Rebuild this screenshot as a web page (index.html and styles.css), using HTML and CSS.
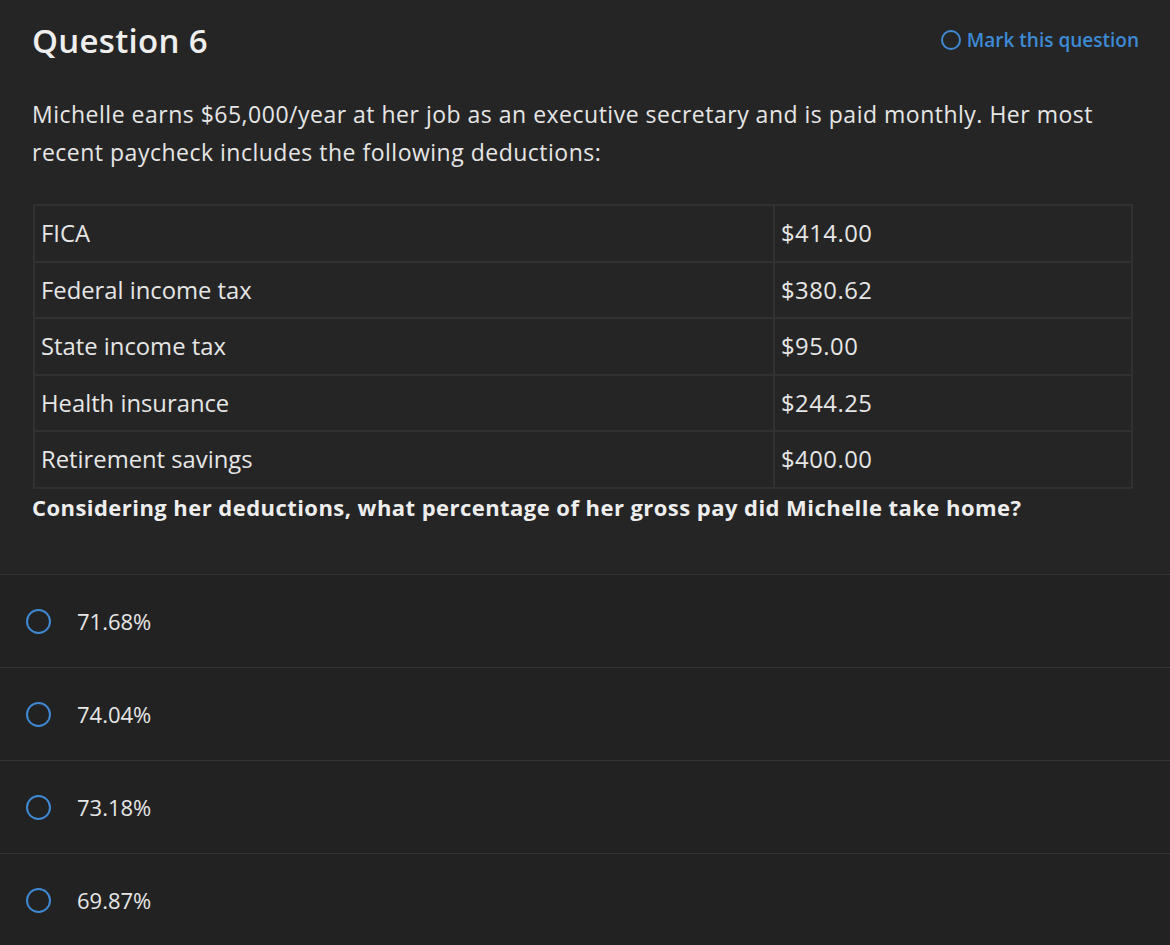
FILE: index.html
```html
<!DOCTYPE html>
<html lang="en">
<head>
<meta charset="utf-8">
<title>Question 6</title>
<link rel="stylesheet" href="styles.css">
</head>
<body>
<div class="question">
  <div class="q-head">
    <h1 class="q-title">Question 6</h1>
    <a class="mark" href="#"><span class="ring small"></span>Mark this question</a>
  </div>
  <div class="q-body">
    <p class="q-text">Michelle earns $65,000/year at her job as an executive secretary and is paid monthly. Her most recent paycheck includes the following deductions:</p>
    <table class="deductions">
      <tr><td class="name">FICA</td><td class="amt">$414.00</td></tr>
      <tr><td class="name">Federal income tax</td><td class="amt">$380.62</td></tr>
      <tr><td class="name">State income tax</td><td class="amt">$95.00</td></tr>
      <tr><td class="name">Health insurance</td><td class="amt">$244.25</td></tr>
      <tr><td class="name">Retirement savings</td><td class="amt">$400.00</td></tr>
    </table>
    <p class="q-ask">Considering her deductions, what percentage of her gross pay did Michelle take home?</p>
  </div>
</div>
<ul class="options">
  <li class="option"><span class="ring"></span><span class="opt-text">71.68%</span></li>
  <li class="option"><span class="ring"></span><span class="opt-text">74.04%</span></li>
  <li class="option"><span class="ring"></span><span class="opt-text">73.18%</span></li>
  <li class="option"><span class="ring"></span><span class="opt-text">69.87%</span></li>
</ul>
</body>
</html>
```
FILE: styles.css
```css
html, body {
  margin: 0;
  padding: 0;
}
body {
  background: #222222;
  color: #e6e6e6;
  font-family: "Open Sans", "Lato", sans-serif;
  height: 945px;
  overflow: hidden;
}
.question {
  background: #252525;
  padding: 0 38px 0 32px;
  border-bottom: 1px solid #333333;
  height: 575px;
  box-sizing: border-box;
}
.q-head {
  display: flex;
  justify-content: space-between;
  align-items: center;
  height: 80px;
}
.q-title {
  margin: 0;
  font-size: 33px;
  font-weight: 600;
  letter-spacing: 0.3px;
  color: #eeeeee;
}
.mark {
  display: flex;
  align-items: center;
  gap: 6px;
  color: #3d8ad6;
  text-decoration: none;
  font-size: 19px;
  font-weight: 600;
  margin-right: -7px;
}
.ring {
  display: inline-block;
  width: 20px;
  height: 20px;
  border: 2.5px solid #3f89d3;
  border-radius: 50%;
  box-sizing: border-box;
  flex: none;
}
.q-body {
  padding-top: 15px;
}
.q-text {
  margin: 0;
  font-size: 23px;
  line-height: 38px;
  letter-spacing: 0.5px;
  color: #e6e6e6;
}
.deductions {
  margin-top: 33px;
  margin-left: 1px;
  width: 1100px;
  border-collapse: collapse;
  font-size: 23.8px;
}
.deductions td {
  border: 2px solid #313131;
  height: 54.5px;
  padding: 0 6px;
  vertical-align: middle;
  color: #e6e6e6;
}
.deductions .name {
  width: 726px;
}
.deductions .amt {
  letter-spacing: 0.5px;
}
.q-ask {
  margin: 3px 0 0;
  font-size: 22px;
  font-weight: 700;
  letter-spacing: 0.45px;
  color: #eeeeee;
}
.options {
  list-style: none;
  margin: 0;
  padding: 0;
}
.option {
  display: flex;
  align-items: center;
  height: 92px;
  padding-left: 26px;
  border-bottom: 1px solid #333333;
}
.option .ring {
  width: 25px;
  height: 25px;
}
.opt-text {
  margin-left: 26px;
  font-size: 22px;
  color: #e6e6e6;
}
```
